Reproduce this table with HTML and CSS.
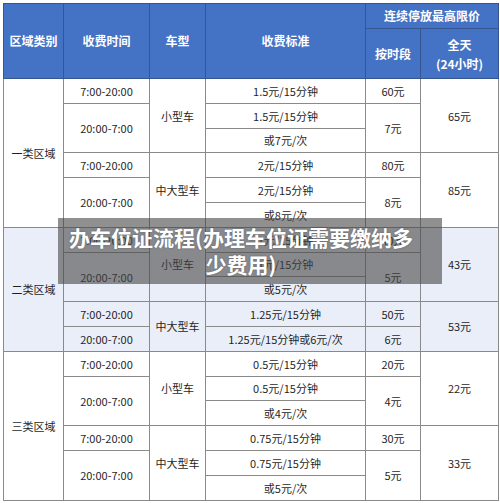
FILE: index.html
```html
<!DOCTYPE html>
<html lang="zh-CN">
<head>
    <meta charset="UTF-8">
    <meta name="viewport" content="width=device-width, initial-scale=1.0">
    <title>办车位证流程</title>
    <link rel="stylesheet" href="styles.css">
</head>
<body>

    <div class="page">
        <table class="fee-table">
            <colgroup>
                <col class="c-zone">
                <col class="c-time">
                <col class="c-car">
                <col class="c-std">
                <col class="c-seg">
                <col class="c-day">
            </colgroup>
            <thead>
                <tr class="head-top">
                    <th rowspan="2">区域类别</th>
                    <th rowspan="2">收费时间</th>
                    <th rowspan="2">车型</th>
                    <th rowspan="2">收费标准</th>
                    <th colspan="2">连续停放最高限价</th>
                </tr>
                <tr class="head-sub">
                    <th>按时段</th>
                    <th class="two-line">全天<br>(24小时)</th>
                </tr>
            </thead>

            <!-- 一类区域 -->
            <tbody class="zone">
                <tr>
                    <td rowspan="6">一类区域</td>
                    <td>7:00-20:00</td>
                    <td rowspan="3">小型车</td>
                    <td>1.5元/15分钟</td>
                    <td>60元</td>
                    <td rowspan="3">65元</td>
                </tr>
                <tr>
                    <td rowspan="2">20:00-7:00</td>
                    <td>1.5元/15分钟</td>
                    <td rowspan="2">7元</td>
                </tr>
                <tr>
                    <td>或7元/次</td>
                </tr>
                <tr>
                    <td>7:00-20:00</td>
                    <td rowspan="3">中大型车</td>
                    <td>2元/15分钟</td>
                    <td>80元</td>
                    <td rowspan="3">85元</td>
                </tr>
                <tr>
                    <td rowspan="2">20:00-7:00</td>
                    <td>2元/15分钟</td>
                    <td rowspan="2">8元</td>
                </tr>
                <tr>
                    <td>或8元/次</td>
                </tr>
            </tbody>

            <!-- 二类区域 -->
            <tbody class="zone zone-alt">
                <tr>
                    <td rowspan="5">二类区域</td>
                    <td>7:00-20:00</td>
                    <td rowspan="3">小型车</td>
                    <td>1元/15分钟</td>
                    <td>40元</td>
                    <td rowspan="3">43元</td>
                </tr>
                <tr>
                    <td rowspan="2">20:00-7:00</td>
                    <td>1元/15分钟</td>
                    <td rowspan="2">5元</td>
                </tr>
                <tr>
                    <td>或5元/次</td>
                </tr>
                <tr>
                    <td>7:00-20:00</td>
                    <td rowspan="2">中大型车</td>
                    <td>1.25元/15分钟</td>
                    <td>50元</td>
                    <td rowspan="2">53元</td>
                </tr>
                <tr>
                    <td>20:00-7:00</td>
                    <td>1.25元/15分钟或6元/次</td>
                    <td>6元</td>
                </tr>
            </tbody>

            <!-- 三类区域 -->
            <tbody class="zone">
                <tr>
                    <td rowspan="6">三类区域</td>
                    <td>7:00-20:00</td>
                    <td rowspan="3">小型车</td>
                    <td>0.5元/15分钟</td>
                    <td>20元</td>
                    <td rowspan="3">22元</td>
                </tr>
                <tr>
                    <td rowspan="2">20:00-7:00</td>
                    <td>0.5元/15分钟</td>
                    <td rowspan="2">4元</td>
                </tr>
                <tr>
                    <td>或4元/次</td>
                </tr>
                <tr>
                    <td>7:00-20:00</td>
                    <td rowspan="3">中大型车</td>
                    <td>0.75元/15分钟</td>
                    <td>30元</td>
                    <td rowspan="3">33元</td>
                </tr>
                <tr>
                    <td rowspan="2">20:00-7:00</td>
                    <td>0.75元/15分钟</td>
                    <td rowspan="2">5元</td>
                </tr>
                <tr>
                    <td>或5元/次</td>
                </tr>
            </tbody>
        </table>

        <div class="caption">办车位证流程(办理车位证需要缴纳多少费用)</div>
    </div>

</body>
</html>
```

FILE: styles.css
```css
body {
    margin: 0;
    padding: 0;
    background-color: #ffffff;
    font-family: "Noto Sans CJK SC", "Noto Sans", sans-serif;
}

.page {
    position: relative;
    width: 500px;
    height: 503px;
    padding: 3px 0 0 3px;
    box-sizing: border-box;
}

.fee-table {
    width: 495px;
    border-collapse: collapse;
    table-layout: fixed;
    border: 1px solid #7a7a7a;
}

.c-zone { width: 60px; }
.c-time { width: 86px; }
.c-car { width: 56px; }
.c-std { width: 160px; }
.c-seg { width: 55px; }
.c-day { width: 78px; }

.fee-table th {
    background-color: #4472c4;
    color: #ffffff;
    font-size: 12px;
    font-weight: bold;
    line-height: 16px;
    padding: 0;
    border: 1px solid #36568f;
    text-align: center;
}

.fee-table th.two-line {
    line-height: 19px;
}

.head-top {
    height: 25px;
}

.head-sub {
    height: 50px;
}

.fee-table td {
    height: 23.8px;
    padding: 0;
    font-size: 11px;
    line-height: 14px;
    color: #1f1f1f;
    text-align: center;
    border: 1px solid #8a8a8a;
}

.zone-alt td {
    background-color: #e9eef8;
}

.caption {
    position: absolute;
    left: 58px;
    top: 218px;
    width: 384px;
    box-sizing: border-box;
    padding: 6px 26px 6px 8px;
    background-color: rgba(70, 70, 70, 0.6);
    color: #ffffff;
    font-size: 21px;
    font-weight: bold;
    line-height: 27px;
    text-align: center;
    text-shadow: 0 0 2px rgba(0, 0, 0, 0.3);
}
```
